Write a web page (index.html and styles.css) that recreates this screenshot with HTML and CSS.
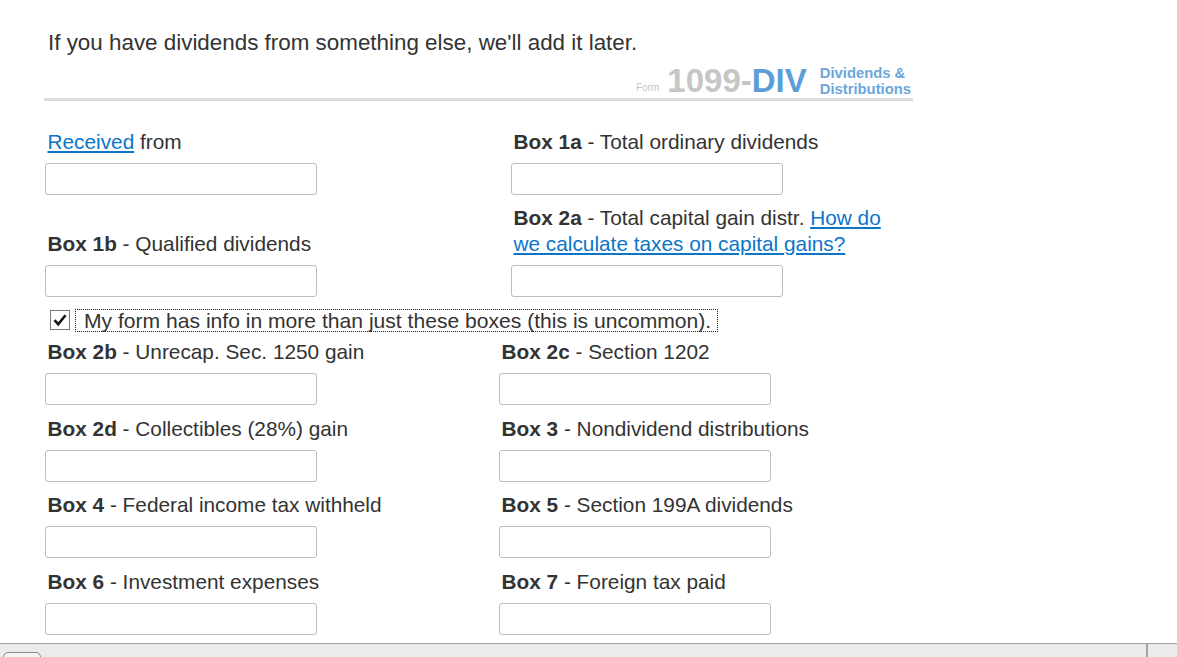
FILE: index.html
```html
<!DOCTYPE html>
<html lang="en">
<head>
<meta charset="utf-8">
<title>1099-DIV</title>
<link rel="stylesheet" href="styles.css">
</head>
<body>
<div class="page">
  <header class="header">
    <h1 class="title">Enter your 1099-DIV info exactly as it appears</h1>
    <p class="intro">If you have dividends from something else, we'll add it later.</p>
    <div class="logo">
      <span class="logo-form">Form</span>
      <span class="logo-num">1099-<span class="logo-div">DIV</span></span>
      <span class="logo-desc">Dividends &amp;<br>Distributions</span>
    </div>
  </header>

  <section class="grid grid-a">
    <label class="lbl"><a href="#" class="link">Received</a> from</label>
    <label class="lbl"><b>Box 1a</b> - Total ordinary dividends</label>
    <input class="field" type="text">
    <input class="field" type="text">
    <label class="lbl lbl-gap"><b>Box 1b</b> - Qualified dividends</label>
    <label class="lbl lbl-gap"><b>Box 2a</b> - Total capital gain distr. <a href="#" class="link">How do we calculate taxes on capital gains?</a></label>
    <input class="field" type="text">
    <input class="field" type="text">
  </section>

  <div class="check-row">
    <span class="check-box"><svg width="16" height="16" viewBox="0 0 16 16"><path d="M2.5 8.2 L6.2 12.2 L13.5 3.2" fill="none" stroke="#111" stroke-width="2.6"/></svg></span>
    <span class="check-text">My form has info in more than just these boxes (this is uncommon).</span>
  </div>

  <section class="grid grid-b">
    <label class="lbl lbl-first"><b>Box 2b</b> - Unrecap. Sec. 1250 gain</label>
    <label class="lbl lbl-first"><b>Box 2c</b> - Section 1202</label>
    <input class="field" type="text">
    <input class="field" type="text">
    <label class="lbl lbl-gapb"><b>Box 2d</b> - Collectibles (28%) gain</label>
    <label class="lbl lbl-gapb"><b>Box 3</b> - Nondividend distributions</label>
    <input class="field" type="text">
    <input class="field" type="text">
    <label class="lbl lbl-gapb"><b>Box 4</b> - Federal income tax withheld</label>
    <label class="lbl lbl-gapb"><b>Box 5</b> - Section 199A dividends</label>
    <input class="field" type="text">
    <input class="field" type="text">
    <label class="lbl lbl-gapb"><b>Box 6</b> - Investment expenses</label>
    <label class="lbl lbl-gapb"><b>Box 7</b> - Foreign tax paid</label>
    <input class="field" type="text">
    <input class="field" type="text">
  </section>
</div>

<div class="bottom-bar">
  <span class="bar-btn"></span>
  <span class="bar-divider"></span>
</div>
</body>
</html>
```

FILE: styles.css
```css
html, body {
  margin: 0;
  padding: 0;
  background: #fff;
  overflow: hidden;
}
body {
  font-family: "Liberation Sans", Arial, sans-serif;
  color: #333;
}
.page {
  display: flow-root;
  padding-left: 44px;
}
.header {
  width: 869px;
  border-bottom: 3px solid #dcdcdc;
}
.title {
  margin: -29px 0 0 4px;
  font-size: 26px;
  line-height: 30px;
  font-weight: normal;
  color: #0b75c9;
  white-space: nowrap;
}
.intro {
  margin: 29px 0 0 0;
  padding: 0 0 0 4px;
  font-size: 22.4px;
  line-height: 26px;
}
.logo {
  display: flex;
  justify-content: flex-end;
  align-items: flex-end;
  margin-top: 8px;
  padding-right: 2px;
  padding-bottom: 1px;
}
.logo-form {
  font-size: 10px;
  line-height: 10px;
  color: #c4c4c4;
  margin-bottom: 4px;
  margin-right: 8px;
}
.logo-num {
  font-size: 33px;
  line-height: 33px;
  font-weight: bold;
  color: #c6c6c6;
}
.logo-div {
  color: #5c9fd8;
}
.logo-desc {
  font-size: 14.8px;
  line-height: 16px;
  font-weight: bold;
  color: #6aa7dc;
  margin-left: 13px;
}
.grid {
  display: grid;
  align-items: end;
}
.grid-a {
  grid-template-columns: 466px 380px;
  margin-top: 28px;
}
.grid-b {
  grid-template-columns: 454px 380px;
  margin-top: 8px;
}
.lbl {
  display: block;
  padding-left: 3.5px;
  font-size: 20.8px;
  line-height: 26px;
  color: #333;
}
.lbl b {
  font-weight: bold;
}
.lbl-gap {
  margin-top: 10px;
}
.lbl-gapb {
  margin-top: 10.5px;
}
.link {
  color: #0b75c9;
  text-decoration: underline;
}
.field {
  box-sizing: border-box;
  width: 272px;
  height: 32px;
  margin: 8px 0 0 1px;
  border: 1px solid #bcbcbc;
  border-radius: 3px;
  background: #fff;
  font: inherit;
  padding: 0 6px;
}
.check-row {
  display: flex;
  align-items: center;
  margin: 12px 0 0 6px;
  height: 22px;
}
.check-box {
  box-sizing: border-box;
  width: 20px;
  height: 20px;
  border: 1px solid #7a7a7a;
  background: #fff;
  display: flex;
  align-items: center;
  justify-content: center;
}
.check-text {
  margin-left: 6px;
  padding: 0 6px 0 8px;
  outline: 1px dotted #222;
  font-size: 21.1px;
  line-height: 21px;
  color: #333;
}
.bottom-bar {
  position: fixed;
  left: 0;
  right: 0;
  bottom: 0;
  height: 13px;
  background: #ebebeb;
  border-top: 1px solid #a3a3a3;
}
.bar-btn {
  position: absolute;
  left: 3px;
  top: 8px;
  width: 36px;
  height: 12px;
  border: 1px solid #8a8a8a;
  border-radius: 5px;
  background: #f4f4f4;
}
.bar-divider {
  position: absolute;
  left: 1146px;
  top: 0;
  bottom: 0;
  width: 2px;
  background: #a3a3a3;
}
```
